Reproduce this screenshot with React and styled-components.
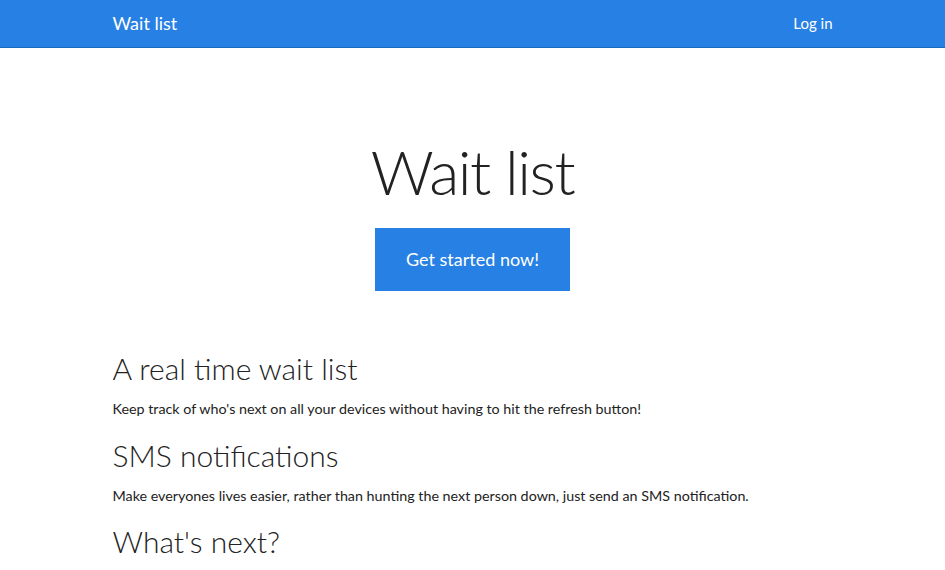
import React from "react";
import styled, { createGlobalStyle } from "styled-components";

const GlobalStyle = createGlobalStyle`
  html, body {
    margin: 0;
    padding: 0;
    background: #fff;
  }
  body {
    font-family: Lato, "Open Sans", "Liberation Sans", sans-serif;
    font-size: 15px;
    line-height: 1.42857;
    color: #222;
  }
`;

const Navbar = styled.nav`
  background: #2780e3;
  border-bottom: 1px solid #1967be;
  height: 47px;
`;

const Container = styled.div`
  width: 720px;
  margin: 0 auto;
  padding: 0 15px;
`;

const NavInner = styled(Container)`
  display: flex;
  align-items: center;
  justify-content: space-between;
  height: 100%;
`;

const Brand = styled.a`
  color: #fff;
  font-size: 18px;
  text-decoration: none;
`;

const NavLink = styled.a`
  color: #fff;
  font-size: 15px;
  text-decoration: none;
`;

const Jumbotron = styled.header`
  display: flex;
  flex-direction: column;
  align-items: center;
  padding: 89px 0 61px;
`;

const Title = styled.h1`
  margin: 0 0 23px;
  font-size: 62px;
  font-weight: 300;
  letter-spacing: -1.5px;
  line-height: 1.1;
  color: #222;
`;

const BigButton = styled.a`
  display: inline-block;
  background: #2780e3;
  color: #fff;
  font-size: 18px;
  line-height: 25px;
  padding: 19px 31px;
  text-decoration: none;
`;

const Feature = styled.section`
  margin-bottom: 19px;
`;

const FeatureTitle = styled.h2`
  margin: 0 0 14px;
  font-size: 30px;
  font-weight: 300;
  line-height: 33px;
  color: #222;
`;

const FeatureText = styled.p`
  margin: 0;
  font-size: 14.3px;
`;

const features = [
  {
    title: "A real time wait list",
    text: "Keep track of who's next on all your devices without having to hit the refresh button!",
  },
  {
    title: "SMS notifications",
    text: "Make everyones lives easier, rather than hunting the next person down, just send an SMS notification.",
  },
  { title: "What's next?" },
];

export default function App() {
  return (
    <>
      <GlobalStyle />
      <Navbar>
        <NavInner>
          <Brand href="#">Wait list</Brand>
          <NavLink href="#">Log in</NavLink>
        </NavInner>
      </Navbar>
      <Jumbotron>
        <Title>Wait list</Title>
        <BigButton href="#">Get started now!</BigButton>
      </Jumbotron>
      <Container>
        {features.map((f) => (
          <Feature key={f.title}>
            <FeatureTitle>{f.title}</FeatureTitle>
            {f.text && <FeatureText>{f.text}</FeatureText>}
          </Feature>
        ))}
      </Container>
    </>
  );
}
